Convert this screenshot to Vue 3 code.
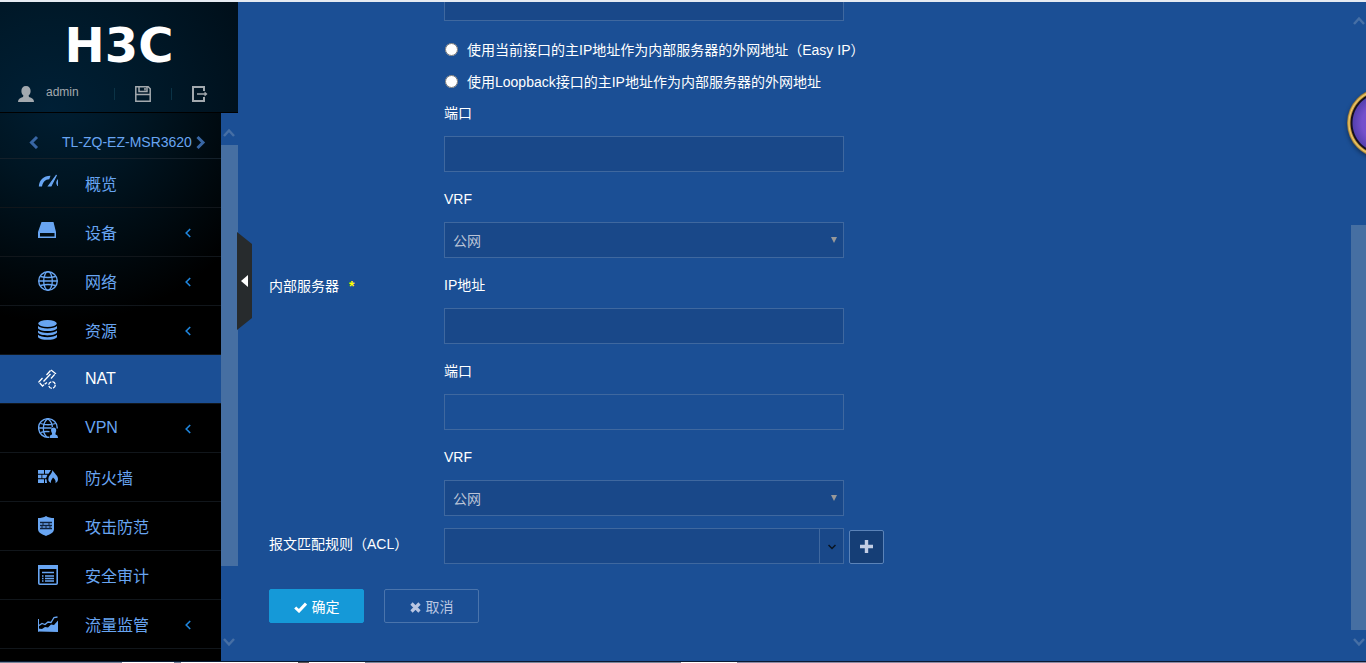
<script setup>
import { ref } from 'vue';

const menus = [
  { icon: 'gauge', label: '概览' },
  { icon: 'device', label: '设备', children: true },
  { icon: 'globe', label: '网络', children: true },
  { icon: 'stack', label: '资源', children: true },
  { icon: 'link', label: 'NAT' },
  { icon: 'vpn', label: 'VPN', children: true },
  { icon: 'firewall', label: '防火墙' },
  { icon: 'shield', label: '攻击防范' },
  { icon: 'audit', label: '安全审计' },
  { icon: 'chart', label: '流量监管', children: true }
];

const active = ref('NAT');
const addressType = ref('');
const form = ref({
  outerIp: '',
  outerPort: '',
  outerVrf: '公网',
  innerIp: '',
  innerPort: '',
  innerVrf: '公网',
  acl: ''
});
</script>

<template>
  <div class="page">
    <div class="workspace">
      <aside class="sidebar">
        <header class="brand">
          <div class="logo">H3C</div>
          <div class="user-bar">
            <svg class="user-icon" width="16" height="16" viewBox="0 0 16 16">
              <path d="M8 0C5 0 3.400 2 3.400 5c0 2 .8 3.600 2 4.600L5 11c-3 .7-5 2-5 5h16c0-3-2-4.300-5-5l-.4-1.400c1.200-1 2-2.600 2-4.600 0-3-1.600-5-4.600-5z" fill="currentColor" />
            </svg>
            <span class="user-name">admin</span>
            <span class="divider"></span>
            <button class="tool" type="button" aria-label="保存">
              <svg width="16" height="16" viewBox="0 0 16 16" fill="none" stroke="currentColor" stroke-width="1.500">
                <path d="M.8.800h12.400l2 2v12.400H.8z" />
                <path d="M4 1v4.500h8V1M1 8.500h14" />
                <path d="M10 2v2.500" stroke-width="1.500" />
              </svg>
            </button>
            <span class="divider"></span>
            <button class="tool" type="button" aria-label="退出">
              <svg width="16" height="16" viewBox="0 0 16 16" fill="none" stroke="currentColor" stroke-width="2">
                <path d="M12 5V1H1v14h11v-4" />
                <path d="M5 8h9" stroke-width="1.500" />
                <path d="M12.500 5.500L15.500 8l-3 2.500z" fill="currentColor" stroke="none" />
              </svg>
            </button>
          </div>
        </header>

        <div class="nav-area">
          <nav class="nav">
            <div class="device">
              <button class="device-arrow" type="button" aria-label="上一个">
                <svg width="10" height="14" viewBox="0 0 10 14"><path d="M8 2L2.500 7.500 8 13" fill="none" stroke="currentColor" stroke-width="3" /></svg>
              </button>
              <span class="device-name">TL-ZQ-EZ-MSR3620</span>
              <button class="device-arrow" type="button" aria-label="下一个">
                <svg width="10" height="14" viewBox="0 0 10 14"><path d="M1.500 2L7 7.500 1.500 13" fill="none" stroke="currentColor" stroke-width="3" /></svg>
              </button>
            </div>

            <a
              v-for="item in menus"
              :key="item.label"
              href="#"
              class="menu-item"
              :class="{ active: active === item.label }"
              @click.prevent="active = item.label"
            >
              <svg class="menu-icon" width="20" height="20" viewBox="0 0 20 20" fill="none" stroke="currentColor">
                <template v-if="item.icon === 'gauge'">
                  <path d="M.8 13.500C1.300 7 5.500 3 12.500 2.800l-1.200 3.500C7 6.500 5 9 4 13.500z" fill="currentColor" stroke="none" />
                  <path d="M10.500 13L18.500 2 13 13z" fill="currentColor" stroke-width="1.200" />
                  <path d="M20 6.500v6.500c-1.800-2-1.800-4.500 0-6.500z" fill="currentColor" stroke-width=".8" />
                </template>
                <template v-else-if="item.icon === 'device'">
                  <path d="M3.500 0h12L18 10v6H0v-6zM2 11v3.500h14.500V11z" fill="currentColor" fill-rule="evenodd" stroke="none" />
                </template>
                <template v-else-if="item.icon === 'globe'">
                  <circle cx="10" cy="10" r="9.300" stroke-width="1.400" />
                  <ellipse cx="10" cy="10" rx="4.300" ry="9.300" stroke-width="1.300" />
                  <path d="M2.500 5.500c4.500 1.200 10.500 1.200 15 0M.7 10h18.600M2.500 14.500c4.500-1.200 10.500-1.200 15 0" stroke-width="1.300" />
                </template>
                <template v-else-if="item.icon === 'stack'">
                  <g fill="currentColor" stroke="none">
                    <ellipse cx="9.500" cy="3.500" rx="9.300" ry="3.500" />
                    <path d="M0 6c3 3.300 16 3.300 19 0v2.200c-2 3.800-17 3.800-19 0z" />
                    <path d="M0 10.400c3 3.300 16 3.300 19 0v2.200c-2 3.800-17 3.800-19 0z" />
                    <path d="M0 14.800c3 3.300 16 3.300 19 0V17c-2 3.800-17 3.800-19 0z" />
                  </g>
                </template>
                <template v-else-if="item.icon === 'link'">
                  <path d="M8.500 6L13 1l4.500 3.500L13 9.500M4.500 9L.8 13l3.700 4L9 13.500" stroke-width="1.300" stroke-dasharray="6 .8" />
                  <path d="M5.500 12.500L12.500 5" stroke-width="1.300" />
                  <circle cx="14" cy="16" r="3.300" stroke-width="1.300" stroke-dasharray="4 1.200" />
                </template>
                <template v-else-if="item.icon === 'vpn'">
                  <path d="M11 19.200A9.300 9.300 0 1 1 19.200 10.500" stroke-width="1.400" />
                  <path d="M9 19c-5-4-5-14 .8-18.300C13 3 14.300 6 14.300 9M2.500 5.500c4.500 1.500 10.500 1.500 15 0M.7 10h13M2.500 14.500c3-1 6-1.200 9-.8" stroke-width="1.300" />
                  <path d="M15.500 9.500c-2.800 0-3 3.500-1.500 5.500v1.500c-1.700.3-2.500 1.500-2.500 3.500h8.500c0-2-.8-3.200-2.500-3.500V15c1.300-2 1-5.500-2-5.500z" fill="currentColor" stroke="none" />
                </template>
                <template v-else-if="item.icon === 'firewall'">
                  <path d="M0 3h6v3.800H0zM7 3h6l-2.500 3.800H7zM0 7.800h3.500v3.500H0zM4.300 7.800h5.200L8 11.300H4.300zM0 12.300h6V16H0zM7 12.300h1.500L9 16H7z" fill="currentColor" stroke="none" />
                  <path d="M14.500 3c1 3 5.500 5 5.500 9 0 2-.8 3-2.500 4.200.5-2.700-.5-4.200-2.500-5.700-1 2-2.500 3-2 5.500-2.500-1-3-3-2.500-5 .5-3 3.500-4 4-8z" fill="currentColor" stroke="none" />
                </template>
                <template v-else-if="item.icon === 'shield'">
                  <path d="M8 0c2 1.500 5 2 8 2v11c0 4-4 5-8 7-4-2-8-3-8-7V2c3 0 6-.5 8-2z" fill="currentColor" stroke="none" />
                  <path d="M2 6.500h12M2 9.500h12M2 12.500h12" class="ink" stroke-width="1.500" />
                  <path d="M5 7v2M11 7v2M8 10v2M4 10v2M12 10v2" class="ink" stroke-width="1" />
                </template>
                <template v-else-if="item.icon === 'audit'">
                  <rect x=".8" y=".8" width="18.400" height="18.400" rx="1" stroke-width="1.600" />
                  <path d="M0 2h20" stroke-width="4" />
                  <path d="M4 7.500h12M4 11h1.500M7 11h9M4 13.500h1.500M7 13.500h9M4 16h1.500M7 16h9" stroke-width="1.500" />
                </template>
                <template v-else>
                  <path d="M.5 5v12.500" />
                  <path d="M1 11.500l3-2 3 1 3-2.500 3 .5 3-5 3.500-.5" stroke-width="1.300" />
                  <path d="M0 17.500v-3l4 .5 3-2 3 .5 3-3 3 .5 4-4.500v11.500z" fill="currentColor" stroke="none" />
                </template>
              </svg>
              <span class="menu-label">{{ item.label }}</span>
              <svg v-if="item.children" class="menu-chevron" width="6" height="10" viewBox="0 0 6 10">
                <path d="M5.200 1L1.200 5l4 4" fill="none" stroke="currentColor" stroke-width="1.600" />
              </svg>
            </a>
            <div class="menu-rest"></div>
          </nav>

          <div class="scrollbar nav-scroll">
            <svg class="scroll-up" width="12" height="10" viewBox="0 0 12 10"><path d="M1 8l5-5.500L11 8" fill="none" stroke="currentColor" stroke-width="2.500" /></svg>
            <div class="nav-thumb"></div>
            <div class="nav-gap">
              <svg width="12" height="10" viewBox="0 0 12 10"><path d="M1 2l5 5.500L11 2" fill="none" stroke="currentColor" stroke-width="2.500" /></svg>
            </div>
          </div>
        </div>

        <button class="collapse" type="button" aria-label="收起菜单">
          <svg width="7" height="12" viewBox="0 0 7 12"><path d="M7 0v12L0 6z" fill="#fff" /></svg>
        </button>
      </aside>

      <main class="content">
        <form class="nat-form" @submit.prevent>
          <div class="form-row">
            <div class="row-label"></div>
            <div class="row-body">
              <input v-model="form.outerIp" class="control" type="text" aria-label="外网地址">
              <div class="radios">
                <label class="radio">
                  <input v-model="addressType" type="radio" name="addressType" value="easyip">
                  <span>使用当前接口的主IP地址作为内部服务器的外网地址（Easy IP）</span>
                </label>
                <label class="radio">
                  <input v-model="addressType" type="radio" name="addressType" value="loopback">
                  <span>使用Loopback接口的主IP地址作为内部服务器的外网地址</span>
                </label>
              </div>
              <div class="field">
                <label for="outer-port">端口</label>
                <input id="outer-port" v-model="form.outerPort" class="control" type="text">
              </div>
              <div class="field spaced">
                <label for="outer-vrf">VRF</label>
                <div class="select-box">
                  <select id="outer-vrf" v-model="form.outerVrf" class="control">
                    <option>公网</option>
                  </select>
                  <svg class="caret" width="6" height="6" viewBox="0 0 6 6"><path d="M0 0h6L3 6z" fill="#999" /></svg>
                </div>
              </div>
            </div>
          </div>

          <div class="form-row spaced">
            <div class="row-label">内部服务器<span class="required">*</span></div>
            <div class="row-body">
              <div class="field">
                <label for="inner-ip">IP地址</label>
                <input id="inner-ip" v-model="form.innerIp" class="control" type="text">
              </div>
              <div class="field spaced">
                <label for="inner-port">端口</label>
                <input id="inner-port" v-model="form.innerPort" class="control plain" type="text">
              </div>
              <div class="field spaced">
                <label for="inner-vrf">VRF</label>
                <div class="select-box">
                  <select id="inner-vrf" v-model="form.innerVrf" class="control">
                    <option>公网</option>
                  </select>
                  <svg class="caret" width="6" height="6" viewBox="0 0 6 6"><path d="M0 0h6L3 6z" fill="#999" /></svg>
                </div>
              </div>
            </div>
          </div>

          <div class="form-row spaced">
            <label class="row-label" for="acl">报文匹配规则（ACL）</label>
            <div class="row-body acl">
              <div class="combo">
                <input id="acl" v-model="form.acl" type="text">
                <button type="button" aria-label="展开">
                  <svg width="8" height="6" viewBox="0 0 8 6"><path d="M.5 1L4 4.500 7.500 1" fill="none" stroke="#0a1420" stroke-width="1.500" /></svg>
                </button>
              </div>
              <button class="add" type="button" aria-label="新增">
                <svg width="13" height="13" viewBox="0 0 13 13"><path d="M6.500 0v13M0 6.500h13" stroke="currentColor" stroke-width="3.400" /></svg>
              </button>
            </div>
          </div>

          <div class="actions">
            <button class="btn primary" type="submit">
              <svg width="13" height="11" viewBox="0 0 13 11"><path d="M1.200 5.500l3.800 3.500 7-7.500" fill="none" stroke="currentColor" stroke-width="3" /></svg>
              确定
            </button>
            <button class="btn" type="button">
              <svg width="11" height="11" viewBox="0 0 11 11"><path d="M1.500 1.500l8 8M9.500 1.500l-8 8" stroke="currentColor" stroke-width="3.200" /></svg>
              取消
            </button>
          </div>
        </form>
      </main>

      <div class="scrollbar page-scroll">
        <div class="page-before">
          <svg width="12" height="10" viewBox="0 0 12 10"><path d="M1 8l5-5.500L11 8" fill="none" stroke="currentColor" stroke-width="2.500" /></svg>
        </div>
        <div class="page-thumb"></div>
        <div class="page-after">
          <svg width="12" height="10" viewBox="0 0 12 10"><path d="M1 2l5 5.500L11 2" fill="none" stroke="currentColor" stroke-width="2.500" /></svg>
        </div>
      </div>

      <div class="orb"></div>
    </div>
    <div class="taskbar"></div>
  </div>
</template>

<style>
body {
  margin: 0;
  background: #1b4f95;
}
</style>

<style scoped>
.page {
  display: flex;
  flex-direction: column;
  box-sizing: border-box;
  height: 100vh;
  border-top: 2px solid #e6ebf2;
  overflow: hidden;
  background: #1b4f95;
  color: #fff;
  font-family: "Liberation Sans", "Noto Sans CJK SC", sans-serif;
  font-size: 14px;
}

.page *,
.page *::before {
  box-sizing: border-box;
}

button,
input,
select {
  margin: 0;
  padding: 0;
  font: inherit;
}

button {
  border: 0;
  background: none;
  color: inherit;
  cursor: pointer;
}

svg {
  display: block;
  flex: none;
}

.workspace {
  position: relative;
  display: flex;
  flex: 1;
  min-height: 0;
  overflow: hidden;
}

/* Sidebar */
.sidebar {
  position: relative;
  display: flex;
  flex-direction: column;
  flex: none;
  width: 238px;
}

.brand {
  height: 111px;
  padding-top: 20px;
  border-bottom: 1px solid #000;
  background: radial-gradient(circle at 50px 110px, #002036 0, #001a2b 90px, #000e18 230px);
}

.logo {
  height: 47px;
  line-height: 47px;
  text-align: center;
  font-family: "DejaVu Sans", sans-serif;
  font-size: 48px;
  font-weight: bold;
}

.user-bar {
  display: flex;
  align-items: center;
  height: 50px;
  padding-left: 18px;
  color: #a3a9ae;
}

.user-name {
  width: 68px;
  margin-left: 12px;
  padding-bottom: 4px;
  font-size: 12px;
}

.divider {
  width: 1px;
  height: 12px;
  background: #0b3346;
}

.tool {
  display: flex;
  justify-content: center;
  width: 56px;
}

.nav-area {
  display: flex;
  flex: 1;
  min-height: 0;
}

.nav {
  display: flex;
  flex-direction: column;
  width: 221px;
  overflow: hidden;
  background: #000 radial-gradient(circle at 60px -20px, #001f34 0, #001522 90px, #000 230px);
}

.device {
  display: flex;
  align-items: center;
  flex: none;
  height: 46px;
  padding: 12px 15px 0 29px;
  border-bottom: 1px solid #14202a;
  color: #68a5f2;
}

.device-arrow {
  color: #3866a4;
}

.device-name {
  flex: 1;
  margin-left: 23px;
  white-space: nowrap;
}

.menu-item {
  display: flex;
  align-items: center;
  flex: none;
  height: 49px;
  padding: 0 30px 0 38px;
  border-bottom: 1px solid #11161b;
  color: #68a5f2;
  font-size: 16px;
  text-decoration: none;
}

.menu-item.active {
  background: #1b4f95;
  color: #fff;
}

.menu-label {
  flex: 1;
  margin-left: 27px;
}

.menu-chevron {
  margin-top: 2px;
  color: #1f86dd;
}

.ink {
  stroke: #10233c;
}

.menu-rest {
  flex: 1;
  background: #000;
}

/* Scrollbars */
.scrollbar {
  display: flex;
  flex-direction: column;
  flex: none;
  color: #466fa5;
}

.scrollbar svg {
  margin: 0 2px;
}

.nav-scroll {
  width: 17px;
  background: #1b4f95;
}

.scroll-up {
  height: 32px;
  padding-top: 8px;
}

.nav-thumb {
  flex: 421;
  background: #466fa2;
}

.nav-gap {
  display: flex;
  flex: 95;
  flex-direction: column;
  justify-content: flex-end;
}

.nav-gap svg {
  margin-bottom: 14px;
}

.page-scroll {
  width: 15px;
}

.page-before {
  display: flex;
  flex: 223;
}

.page-before svg {
  margin-top: 14px;
}

.page-thumb {
  flex: 405;
  background: #466fa2;
}

.page-after {
  display: flex;
  flex: 31;
}

.page-after svg {
  margin-top: 7px;
}

/* Tab that hangs over the edge between menu and form */
.collapse {
  position: absolute;
  top: 230px;
  left: 237px;
  z-index: 2;
  display: flex;
  align-items: center;
  justify-content: center;
  width: 15px;
  height: 98px;
  background: #272b2d;
  clip-path: polygon(0 0, 100% 12px, 100% 86px, 0 100%);
}

/* Form */
.content {
  flex: 1;
  min-width: 0;
  overflow: hidden;
}

.nat-form {
  margin-top: -17px;
  padding-left: 31px;
}

.form-row {
  display: flex;
}

.row-label {
  flex: none;
  width: 175px;
  line-height: 32px;
}

.spaced {
  margin-top: 12px;
}

.required {
  margin-left: 10px;
  color: #ff0;
  font-weight: bold;
}

.row-body {
  flex: 1;
}

.radios {
  padding: 12px 0 1px;
}

.radio {
  display: flex;
  align-items: center;
  height: 32px;
}

.radio input {
  width: 13px;
  height: 13px;
  margin: 0 9px 0 1px;
}

.field label {
  display: block;
  height: 30px;
  margin-bottom: 8px;
  line-height: 30px;
}

.control {
  display: block;
  width: 400px;
  max-width: 100%;
  height: 36px;
  padding: 0 8px;
  border: 1px solid #3f689f;
  border-radius: 0;
  background: #194889;
  color: #b9c3d6;
  outline: none;
  appearance: none;
}

.control.plain {
  background: transparent;
}

select.control {
  padding-top: 2px;
}

.select-box {
  position: relative;
  width: 400px;
  max-width: 100%;
}

.caret {
  position: absolute;
  top: 15px;
  right: 7px;
  pointer-events: none;
}

.acl {
  display: flex;
  align-items: flex-end;
  gap: 5px;
}

.combo {
  display: flex;
  width: 400px;
  height: 36px;
  border: 1px solid #3f689f;
  background: #194889;
}

.combo input {
  flex: 1;
  min-width: 0;
  padding: 0 8px;
  border: 0;
  background: none;
  color: #b9c3d6;
  outline: none;
}

.combo button {
  display: flex;
  align-items: center;
  justify-content: center;
  width: 24px;
  padding-top: 2px;
  border-left: 1px solid #3f689f;
}

.add {
  display: flex;
  align-items: center;
  justify-content: center;
  width: 35px;
  height: 34px;
  padding-bottom: 2px;
  border: 1px solid #5b83b8;
  border-radius: 2px;
  background: #153e76;
  color: #c2cde4;
}

.actions {
  display: flex;
  gap: 20px;
  margin-top: 25px;
}

.btn {
  display: flex;
  align-items: center;
  justify-content: center;
  gap: 5px;
  width: 95px;
  height: 34px;
  border: 1px solid #4a74ac;
  border-radius: 2px;
  color: #b9c6e2;
}

.btn svg {
  margin-top: 2px;
}

.btn.primary {
  border-color: #1599d8;
  background: #1599d8;
  color: #fff;
}

/* Floating ball, half off the right edge */
.orb {
  position: absolute;
  top: 86px;
  right: -51px;
  width: 70px;
  height: 70px;
  border-radius: 50%;
  background: radial-gradient(circle, #7b50d0 0, #7350cc 20px, #5540b0 29px, #15101f 30px, #15101f 31px, #c99a3c 32px, #f0cc6c 33px, #8a6828 35px);
  box-shadow: 0 2px 4px rgba(0, 0, 0, 0.4);
}

.taskbar {
  flex: none;
  height: 2px;
  border-top: 1px solid #0c1a33;
  background: linear-gradient(to right, #77859a 0 122px, #fff 122px 174px, #77859a 174px 181px, #fff 181px 298px, #555 298px 309px, #fff 309px 365px, #77859a 365px 681px, #fff 681px 737px, #8a8aa4 737px);
}
</style>
